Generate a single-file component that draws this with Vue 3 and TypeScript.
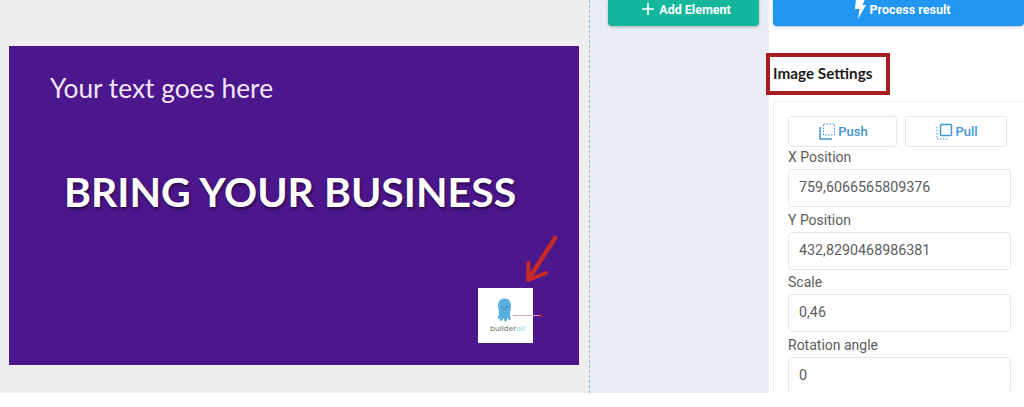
<template>
  <div class="page">
    <div class="workspace">
      <section class="stage">
        <div class="canvas">
          <p class="small-text">Your text goes here</p>
          <h1 class="big-text">BRING YOUR BUSINESS</h1>
          <svg class="arrow" width="36" height="50" viewBox="0 0 36 50">
            <path d="M32 3 L7 42" stroke="#c62a26" stroke-width="4.500" fill="none" stroke-linecap="round" />
            <path d="M5.500 28 L5 45 L23 38" stroke="#c62a26" stroke-width="4" fill="none" stroke-linejoin="round" stroke-linecap="round" />
          </svg>
          <div class="logo">
            <svg width="15" height="24" viewBox="0 0 15 24">
              <path d="M7.500 0.500 C12 0.500 14 4 14 8 C14 11 13 13 13 16 C13 19 14.500 21 13 22 C11.500 22.500 11 20 10.500 20 C10 20 10 23.500 8.500 23.500 C7 23.500 7 20 6.500 20 C6 20 5.500 23 4 23 C2.500 23 3 20 2.500 20 C2 20 1.500 21.500 1 21 C0 20 2 18 2 15 C2 12 1 11 1 8 C1 4 3 0.500 7.500 0.500 Z" fill="#5aaee0" />
              <circle cx="5" cy="9" r="0.800" fill="#2b6a96" />
              <circle cx="10" cy="9" r="0.800" fill="#2b6a96" />
              <path d="M6 11.500 Q7.500 12.800 9 11.500" stroke="#2b6a96" stroke-width="0.600" fill="none" />
            </svg>
            <span class="logo-name">builder<span class="logo-tail">all</span></span>
          </div>
          <div class="handle-line"></div>
          <div class="handle-dot"></div>
        </div>
      </section>

      <section class="middle">
        <button class="action add">
          <svg width="14" height="14" viewBox="0 0 14 14">
            <path d="M7 1V13M1 7H13" stroke="#fff" stroke-width="1.600" />
          </svg>
          Add Element
        </button>
      </section>

      <aside class="side">
        <button class="action process">
          <svg width="12" height="20" viewBox="0 0 12 20">
            <path d="M2 0H11L8.500 6H12L4 20L5.500 10H1Z" fill="#fff" />
          </svg>
          Process result
        </button>

        <div class="title-row">
          <h2 class="title">Image Settings</h2>
        </div>

        <div class="card">
          <div class="layer-buttons">
            <button class="layer push">
              <svg width="17" height="17" viewBox="0 0 17 17">
                <path d="M1 4V16H13" stroke="#3f97d6" stroke-width="1.500" fill="none" />
                <rect x="4.500" y="1" width="11" height="11" stroke="#3f97d6" stroke-dasharray="1.500 1.500" fill="none" />
              </svg>
              Push
            </button>
            <button class="layer pull">
              <svg width="17" height="17" viewBox="0 0 17 17">
                <rect x="4.500" y="1.500" width="11" height="11" rx="1" stroke="#3f97d6" stroke-width="1.500" fill="none" />
                <path d="M1 4V16H13" stroke="#3f97d6" stroke-dasharray="1.500 1.500" fill="none" />
              </svg>
              Pull
            </button>
          </div>

          <div v-for="field in fields" :key="field.label" class="field">
            <label class="field-label">{{ field.label }}</label>
            <div class="field-input">{{ field.value }}</div>
          </div>
        </div>
      </aside>
    </div>
  </div>
</template>

<script setup lang="ts">
interface Field {
  label: string
  value: string
}

const fields: Field[] = [
  { label: 'X Position', value: '759,6066565809376' },
  { label: 'Y Position', value: '432,8290468986381' },
  { label: 'Scale', value: '0,46' },
  { label: 'Rotation angle', value: '0' }
]
</script>

<style scoped>
.page {
  width: 1024px;
  height: 407px;
  overflow: hidden;
  background: #fff;
  font-family: Roboto, "Liberation Sans", sans-serif;
}

.workspace {
  display: flex;
  height: 393px;
  overflow: hidden;
}

/* left */
.stage {
  width: 590px;
  flex: none;
  box-sizing: border-box;
  padding: 46px 0 0 9px;
  background: #eeeeee;
  border-right: 1px dashed #9db4cc;
}

.canvas {
  position: relative;
  width: 570px;
  height: 319px;
  background: #4c168c;
  color: #fff;
}

.small-text {
  position: absolute;
  left: 41px;
  top: 25px;
  margin: 0;
  font-family: Lato, sans-serif;
  font-size: 26.300px;
  line-height: 34px;
  color: #f3e6f8;
  white-space: nowrap;
}

.big-text {
  position: absolute;
  left: 55px;
  top: 121px;
  margin: 0;
  font-family: Lato, sans-serif;
  font-size: 41px;
  font-weight: 700;
  line-height: 50px;
  white-space: nowrap;
  text-shadow: 1px 2px 3px rgba(0, 0, 0, 0.5);
}

.arrow {
  position: absolute;
  left: 514px;
  top: 189px;
}

.logo {
  position: absolute;
  left: 469px;
  top: 242px;
  width: 55px;
  height: 55px;
  box-sizing: border-box;
  padding: 10px 2px 0 0;
  background: #fff;
  display: flex;
  flex-direction: column;
  align-items: center;
}

.logo-name {
  font-family: "Open Sans", sans-serif;
  font-size: 8px;
  line-height: 10px;
  color: #666;
  margin: 1px 0 0 6px;
}

.logo-tail {
  color: #8fcbe8;
}

.handle-line {
  position: absolute;
  left: 504px;
  top: 269px;
  width: 27px;
  height: 1px;
  background: #d9a8bc;
}

.handle-dot {
  position: absolute;
  left: 530px;
  top: 268px;
  width: 3px;
  height: 3px;
  border-radius: 50%;
  background: #c4184e;
}

/* middle */
.middle {
  width: 178px;
  flex: none;
  box-sizing: border-box;
  padding-left: 18px;
  background: #e9ecf2;
}

.action {
  height: 26px;
  display: flex;
  align-items: center;
  justify-content: center;
  gap: 4px;
  border: none;
  border-radius: 0 0 4px 4px;
  box-shadow: 0 1px 3px rgba(0, 0, 0, 0.25);
  color: #fff;
  font-family: Roboto, sans-serif;
  font-size: 12.500px;
  font-weight: 700;
}

.add {
  width: 151px;
  padding: 0 0 8px 5px;
  background: #14b79b;
}

.process {
  width: 100%;
  padding: 0 0 8px 7px;
  background: #2196f3;
}

/* right */
.side {
  flex: 1;
  box-sizing: border-box;
  padding-left: 4px;
  background: #fff;
  border-left: 1px solid #f1f1f4;
}

.title-row {
  height: 75px;
  display: flex;
  align-items: center;
  box-sizing: border-box;
}

.title {
  position: relative;
  margin: 19px 0 0;
  font-family: Lato, sans-serif;
  font-size: 15.300px;
  font-weight: 700;
  line-height: 20px;
  color: #1c1c1c;
}

.title::before {
  content: "";
  position: absolute;
  left: -7px;
  top: -10px;
  width: 124px;
  height: 42px;
  box-sizing: border-box;
  border: 4px solid #a61b24;
}

.card {
  box-sizing: border-box;
  height: 300px;
  padding: 14px 12px 0 14px;
  border: 1px solid #eeeeee;
  border-right: none;
}

.layer-buttons {
  display: flex;
  gap: 8px;
  margin-bottom: 1px;
}

.layer {
  height: 31px;
  display: flex;
  align-items: center;
  justify-content: center;
  gap: 2px;
  padding: 0 0 0 2px;
  background: #fff;
  border: 1px solid #e6e8ec;
  border-radius: 3px;
  color: #3f97d6;
  font-family: Roboto, sans-serif;
  font-size: 13px;
  font-weight: 500;
}

.push {
  width: 109px;
}

.pull {
  width: 102px;
}

.field-label {
  display: block;
  margin-bottom: 2px;
  font-size: 14px;
  line-height: 19px;
  color: #5d5d5d;
}

.field-input {
  box-sizing: border-box;
  width: 223px;
  height: 38px;
  margin-bottom: 3.700px;
  padding: 0 0 2px 10px;
  display: flex;
  align-items: center;
  border: 1px solid #e6e8ec;
  border-radius: 4px;
  font-size: 14.300px;
  color: #5d5d5d;
}
</style>

<style>
body {
  background: #fff;
}
</style>
